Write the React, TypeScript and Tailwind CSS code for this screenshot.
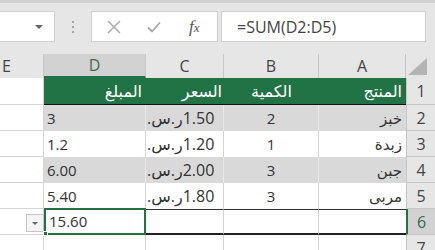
import React from "react";

const W = { e: 44, d: 102, c: 78, b: 95, a: 87, h: 29 };

interface Row {
  n: number;
  a: string;
  b: string;
  c: string;
  d: string;
}

const rows: Row[] = [
  { n: 2, a: "خبز", b: "2", c: "1.50", d: "3" },
  { n: 3, a: "زبدة", b: "1", c: "1.20", d: "1.2" },
  { n: 4, a: "جبن", b: "3", c: "2.00", d: "6.00" },
  { n: 5, a: "مربى", b: "3", c: "1.80", d: "5.40" },
];

function RowHead({ n, selected }: { n: number; selected?: boolean }) {
  return (
    <div
      className={`w-[29px] shrink-0 flex items-center justify-center border-b border-[#c6c6c6] text-[16px] ${
        selected
          ? "bg-[#d2d2d2] border-l-2 border-l-[#217346] text-[#2f6b45]"
          : "bg-[#e6e6e6] border-l border-l-[#c6c6c6] text-[#444]"
      }`}
    >
      {n}
    </div>
  );
}

export default function App() {
  return (
    <div className="w-[435px] h-[250px] overflow-hidden bg-white relative font-['Open_Sans','DejaVu_Sans',sans-serif] text-[15px] text-[#333]">
      {/* formula bar */}
      <div className="h-[54px] bg-[#e6e6e6] border-t-[3px] border-[#d2d2d2] flex items-start pt-[8px]">
        <div className="w-[55px] h-[31px] bg-white border border-l-0 border-[#d0d0d0] flex items-center justify-end pr-[11px]">
          <div className="w-0 h-0 border-l-[4px] border-r-[4px] border-t-[4px] border-l-transparent border-r-transparent border-t-[#666]" />
        </div>
        <div className="w-[36px] h-[31px] flex flex-col items-center justify-center gap-[3px]">
          <div className="w-[2px] h-[2px] bg-[#a6a6a6]" />
          <div className="w-[2px] h-[2px] bg-[#a6a6a6]" />
          <div className="w-[2px] h-[2px] bg-[#a6a6a6]" />
        </div>
        <div className="w-[127px] h-[31px] bg-white border border-[#d0d0d0] flex items-center">
          <svg width="14" height="14" viewBox="0 0 14 14" className="ml-[15px]">
            <path d="M1 1 L13 13 M13 1 L1 13" stroke="#a6a6a6" strokeWidth="1.4" />
          </svg>
          <svg width="14" height="12" viewBox="0 0 14 12" className="ml-[26px]">
            <path d="M1 6.5 L5 10.5 L13 1.5" stroke="#a6a6a6" strokeWidth="1.8" fill="none" />
          </svg>
          <span className="ml-[28px] font-['Liberation_Serif',serif] italic text-[17px] text-[#555] leading-none">
            f<span className="text-[13px]">x</span>
          </span>
        </div>
        <div className="ml-[3px] w-[205px] h-[31px] bg-white border border-[#d0d0d0] flex items-center pl-[15px] text-[16px] text-[#444]">
          =SUM(D2:D5)
        </div>
      </div>

      {/* column headers */}
      <div className="flex h-[24px] bg-[#e6e6e6] text-[16px] text-[#444]">
        <div className="w-[44px] shrink-0 border-r border-[#c6c6c6] flex items-center pl-[2px]">E</div>
        <div className="w-[102px] shrink-0 bg-[#d2d2d2] border-b-2 border-[#217346] border-r border-r-[#c6c6c6] flex items-center justify-center text-[#3a6e4d]">
          D
        </div>
        <div className="w-[78px] shrink-0 border-r border-[#c6c6c6] flex items-center justify-center">C</div>
        <div className="w-[95px] shrink-0 border-r border-[#c6c6c6] flex items-center justify-center">B</div>
        <div className="w-[87px] shrink-0 border-r border-[#c6c6c6] flex items-center justify-center">A</div>
        <div className="w-[29px] shrink-0 flex items-end justify-end pb-[3px] pr-[8px]">
          <svg width="19" height="17" viewBox="0 0 19 17">
            <path d="M19 0 L19 17 L0 17 Z" fill="#b4b4b4" />
          </svg>
        </div>
      </div>

      {/* header row 1 */}
      <div className="flex h-[27px]">
        <div style={{ width: W.e }} className="shrink-0 border-r border-b border-[#d4d4d4]" />
        <div className="flex bg-[#217346] text-white text-[16px] border-b border-[#111]">
          <div style={{ width: W.d }} className="shrink-0 flex items-center justify-end pr-[4px]">المبلغ</div>
          <div style={{ width: W.c }} className="shrink-0 flex items-center justify-end pr-[2px]">السعر</div>
          <div style={{ width: W.b }} className="shrink-0 flex items-center justify-center">الكمية</div>
          <div style={{ width: W.a }} className="shrink-0 flex items-center justify-end pr-[4px]">المنتج</div>
        </div>
        <RowHead n={1} />
      </div>

      {rows.map((r, i) => {
        const band = i % 2 === 0;
        const cell = band ? "bg-[#d9d9d9] border-r border-[#e9e9e9]" : "bg-white border-r border-[#d4d4d4]";
        return (
          <div key={r.n} className="flex h-[26px]">
            <div style={{ width: W.e }} className="shrink-0 border-r border-b border-[#d4d4d4]" />
            <div style={{ width: W.d }} className={`shrink-0 flex items-center pl-[3px] ${cell}`}>{r.d}</div>
            <div style={{ width: W.c }} className={`shrink-0 flex items-center pl-[1px] text-[16px] ${cell}`}>
              <span dir="rtl">ر.س.</span>
              <span>{r.c}</span>
            </div>
            <div style={{ width: W.b }} className={`shrink-0 flex items-center justify-center ${cell}`}>{r.b}</div>
            <div style={{ width: W.a }} className={`shrink-0 flex items-center justify-end pr-[4px] ${band ? "bg-[#d9d9d9]" : "bg-white"}`}>
              {r.a}
            </div>
            <RowHead n={r.n} />
          </div>
        );
      })}

      {/* total row 6 */}
      <div className="flex h-[26px] relative">
        <div style={{ width: W.e }} className="shrink-0 border-r border-b border-[#d4d4d4] relative">
          <div className="absolute left-[26px] top-[5px] w-[18px] h-[18px] bg-[#f4f4f4] border border-[#c6c6c6] flex items-center justify-center">
            <div className="w-0 h-0 border-l-[3px] border-r-[3px] border-t-[3px] border-l-transparent border-r-transparent border-t-[#666]" />
          </div>
        </div>
        <div style={{ width: W.d }} className="shrink-0 flex items-center pl-[3px] border-2 border-[#217346] relative -mt-[1px] h-[27px]">
          15.60
          <div className="absolute -left-[3px] -bottom-[3px] w-[5px] h-[5px] bg-[#217346] border border-white" />
        </div>
        <div style={{ width: W.c }} className="shrink-0 border-t border-t-[#333] border-b-2 border-b-[#222] border-r border-r-[#d4d4d4]" />
        <div style={{ width: W.b }} className="shrink-0 border-t border-t-[#333] border-b-2 border-b-[#222] border-r border-r-[#d4d4d4]" />
        <div style={{ width: W.a }} className="shrink-0 border-t border-t-[#333] border-b-2 border-b-[#222]" />
        <RowHead n={6} selected />
      </div>

      {/* row 7 */}
      <div className="flex h-[26px]">
        <div style={{ width: W.e }} className="shrink-0 border-r border-b border-[#d4d4d4]" />
        <div style={{ width: W.d }} className="shrink-0 border-r border-b border-[#d4d4d4]" />
        <div style={{ width: W.c }} className="shrink-0 border-r border-b border-[#d4d4d4]" />
        <div style={{ width: W.b }} className="shrink-0 border-r border-b border-[#d4d4d4]" />
        <div style={{ width: W.a }} className="shrink-0 border-b border-[#d4d4d4]" />
        <RowHead n={7} />
      </div>
    </div>
  );
}
